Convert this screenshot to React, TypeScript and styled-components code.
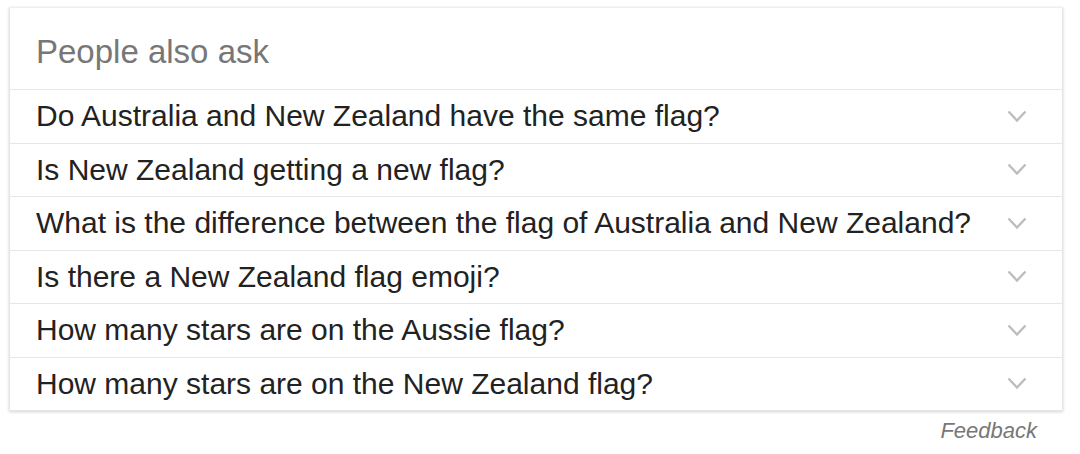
import React from 'react';
import styled, { createGlobalStyle } from 'styled-components';

const GlobalStyle = createGlobalStyle`
  body {
    margin: 0;
    background: #fff;
    font-family: 'Liberation Sans', Arial, sans-serif;
  }
`;

const Page = styled.div`
  padding: 7px 17px 0 9px;
  width: 1054px;
`;

const Card = styled.div`
  background: #fff;
  border: 1px solid #e6e6e6;
  border-top-color: #eeeeee;
  box-shadow: 0 1px 3px rgba(0, 0, 0, 0.18);
`;

const Header = styled.div`
  height: 82px;
  box-sizing: border-box;
  padding: 24px 0 0 26px;
  font-size: 33px;
  line-height: 40px;
  color: #777;
  border-bottom: 1px solid #e6e6e6;
`;

const Row = styled.div<{ $last?: boolean }>`
  height: 52.5px;
  display: flex;
  align-items: center;
  justify-content: space-between;
  padding: 0 35px 0 26px;
  border-bottom: ${(p) => (p.$last ? 'none' : '1px solid #e6e6e6')};
  font-size: 30px;
  color: #222;
  cursor: pointer;
`;

const Question = styled.span`
  white-space: nowrap;
`;

const Chevron = styled.svg`
  width: 20px;
  height: 13px;
  flex-shrink: 0;
`;

const Feedback = styled.div`
  text-align: right;
  padding: 7px 26px 0 0;
  font-size: 22px;
  font-style: italic;
  color: #777;
`;

const questions = [
  'Do Australia and New Zealand have the same flag?',
  'Is New Zealand getting a new flag?',
  'What is the difference between the flag of Australia and New Zealand?',
  'Is there a New Zealand flag emoji?',
  'How many stars are on the Aussie flag?',
  'How many stars are on the New Zealand flag?',
];

const App = () => (
  <>
    <GlobalStyle />
    <Page>
      <Card>
        <Header>People also ask</Header>
        {questions.map((q, i) => (
          <Row key={q} $last={i === questions.length - 1}>
            <Question>{q}</Question>
            <Chevron viewBox="0 0 20 13">
              <path d="M1.5 1.5 L10 10.5 L18.5 1.5" fill="none" stroke="#bdbdbd" strokeWidth="2.4" />
            </Chevron>
          </Row>
        ))}
      </Card>
      <Feedback>Feedback</Feedback>
    </Page>
  </>
);

export default App;
